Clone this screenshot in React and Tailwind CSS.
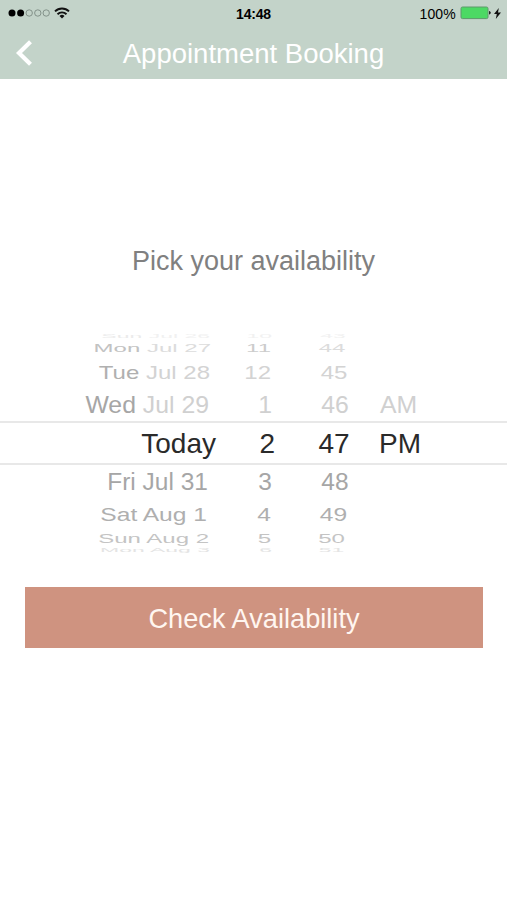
import React from "react";

// Rows of the date wheel, squashed more the further they are from the middle
const rows = [
  {
    day: "Sun",
    date: "Jul 26",
    hour: "10",
    minute: "43",
    box: "h-[7px] pt-0.5 text-[23px] text-[#f1f1f1] pr-[297px]",
    dayColor: "text-[#ebebeb]",
    timeLeft: "ml-[26px]",
    minuteShift: "pr-[4px]",
    scale: "scale-y-[0.2]",
  },
  {
    day: "Mon",
    date: "Jul 27",
    hour: "11",
    minute: "44",
    box: "h-[17px] pt-0.5 text-[24px] text-[#dcdcdc] pr-[296px]",
    dayColor: "text-[#c2c2c2]",
    hourColor: "text-[#cccccc]",
    timeLeft: "ml-[24px]",
    minuteShift: "pr-[4px]",
    scale: "scale-y-[0.46]",
  },
  {
    day: "Tue",
    date: "Jul 28",
    hour: "12",
    minute: "45",
    box: "h-[31px] pt-0.5 text-[24px] text-[#d3d3d3] pr-[297px]",
    dayColor: "text-[#b0b0b0]",
    timeLeft: "ml-[25px]",
    scale: "scale-y-[0.77]",
  },
  {
    day: "Wed",
    date: "Jul 29",
    hour: "1",
    minute: "46",
    period: "AM",
    box: "h-[34px] pt-0.5 text-[24.8px] text-[#d0d0d0] pr-[298px]",
    dayColor: "text-[#a6a6a6]",
    timeLeft: "ml-[27px]",
    scale: "scale-y-[0.94]",
  },
  {
    day: "Today",
    hour: "2",
    minute: "47",
    period: "PM",
    box: "h-[44px] border-y-2 border-[#e8e8e8] pt-0.5 text-[28px] text-[#2a2a2a] pr-[291px]",
    hourShift: "translate-x-[4px]",
    timeLeft: "ml-[19px]",
    scale: "scale-y-100",
  },
  {
    day: "Fri",
    date: "Jul 31",
    hour: "3",
    minute: "48",
    box: "h-[33px] pt-0.5 text-[24.5px] text-[#a6a6a6] pr-[299px]",
    timeLeft: "ml-[28px]",
    scale: "scale-y-[0.95]",
  },
  {
    day: "Sat",
    date: "Aug 1",
    hour: "4",
    minute: "49",
    box: "h-[33px] pt-0.5 text-[24.6px] text-[#afafaf] pr-[300px]",
    timeLeft: "ml-[28px]",
    minuteShift: "pr-[1px]",
    scale: "scale-y-[0.77]",
  },
  {
    day: "Sun",
    date: "Aug 2",
    hour: "5",
    minute: "50",
    box: "h-[15px] text-[24px] text-[#c4c4c4] pr-[298px]",
    timeLeft: "ml-[26px]",
    minuteShift: "pr-[5px]",
    scale: "scale-y-[0.5]",
  },
  {
    day: "Mon",
    date: "Aug 3",
    hour: "6",
    minute: "51",
    box: "h-[7px] pt-0.5 text-[23px] text-[#e4e4e4] pr-[297px]",
    timeLeft: "ml-[26px]",
    minuteShift: "pr-[7px]",
    scale: "scale-y-[0.2]",
  },
];

const StatusBar = () => {
  return (
    <div className="flex h-[27px] items-center px-2 text-black">
      {/* Signal */}
      <div className="flex flex-1 items-center">
        <svg
          className="-mt-0.5"
          width="42"
          height="10"
          viewBox="0 0 42 10"
        >
          <circle cx="4" cy="5" r="3.5" />
          <circle cx="12.6" cy="5" r="3.5" />
          <g fill="none" stroke="#7c8a82" strokeWidth="0.9">
            <circle cx="21.2" cy="5" r="3.2" />
            <circle cx="29.8" cy="5" r="3.2" />
            <circle cx="38.2" cy="5" r="3.2" />
          </g>
        </svg>
        <svg
          className="-mt-0.5 ml-1"
          width="16"
          height="12"
          viewBox="0 0 16 12"
        >
          <g fill="none" stroke="#111" strokeWidth="1.9">
            <path d="M1 4.4a10 10 0 0 1 14 0" />
            <path d="M3.5 7.2a6.4 6.4 0 0 1 9 0" />
          </g>
          <path d="M5.5 9a3.6 3.6 0 0 1 5 0L8 11.6z" fill="#111" />
        </svg>
      </div>

      <span className="pt-px text-[14px] font-bold tracking-[-0.2px]">
        14:48
      </span>

      {/* Battery */}
      <div className="flex flex-1 items-center justify-end">
        <span className="pt-px text-[14px] tracking-[0.2px]">100%</span>
        <svg
          className="-mt-px ml-1"
          width="31"
          height="14"
          viewBox="0 0 31 14"
        >
          <rect
            x="1"
            y="1"
            width="27"
            height="11.6"
            rx="1.5"
            fill="#4cd964"
            stroke="#5c9a6b"
            strokeWidth="1"
          />
          <path d="M29 5v3.6c1.2-.3 1.8-1 1.8-1.8S30.2 5.3 29 5z" fill="#222" />
        </svg>
        <svg
          className="-mt-px ml-[3px] mr-[-2px]"
          width="7"
          height="11"
          viewBox="0 0 7 11"
        >
          <path d="M4.8 0 0 6h2.8L1.8 11 7 4.6H4z" fill="#111" />
        </svg>
      </div>
    </div>
  );
};

const WheelRow = ({ row }) => {
  return (
    <div className={`flex ${row.box}`}>
      <div
        className={`flex min-w-0 flex-1 items-center justify-end whitespace-nowrap leading-none ${row.scale}`}
      >
        <span className={row.dayColor}>{row.day}</span>
        {row.date && <span className="whitespace-pre"> {row.date}</span>}
      </div>
      {/* Time columns */}
      <div className="w-0">
        <div
          className={`flex h-full w-[230px] items-center leading-none ${row.timeLeft} ${row.scale}`}
        >
          <span
            className={`w-[36px] text-right ${row.hourColor || ""} ${row.hourShift || ""}`}
          >
            {row.hour}
          </span>
          <span
            className={`ml-[43px] w-[40px] text-center ${row.minuteShift || ""}`}
          >
            {row.minute}
          </span>
          <span className="ml-[25px]">{row.period}</span>
        </div>
      </div>
    </div>
  );
};

const App = () => {
  return (
    <div className="flex h-[900px] w-[507px] flex-col overflow-hidden bg-white font-['Liberation_Sans',Arial,sans-serif]">
      {/* Header */}
      <header className="h-[79px] bg-[#c3d3c9]">
        <StatusBar />
        <div className="grid h-[52px] grid-cols-[48px_1fr_48px] items-center">
          <svg
            className="ml-[15px]"
            width="18"
            height="26"
            viewBox="0 0 18 26"
            fill="none"
            stroke="white"
            strokeWidth="4.2"
          >
            <path d="M15.5 1.8 4 13 15.5 24.2" />
          </svg>
          <h1 className="pt-px text-center text-[27.5px] text-white">
            Appointment Booking
          </h1>
        </div>
      </header>

      <h2 className="mt-[162px] text-center text-[27px] leading-10 text-[#808080]">
        Pick your availability
      </h2>

      {/* Date wheel */}
      <div className="mt-[51px] overflow-hidden">
        {rows.map((row, i) => (
          <WheelRow key={i} row={row} />
        ))}
      </div>

      {/* Button */}
      <button
        type="button"
        className="ml-[25px] mr-[24px] mt-[34px] h-[61px] bg-[#cf9380] pt-[3px] text-[27.2px] text-[#fff6f0]"
      >
        Check Availability
      </button>
    </div>
  );
};

export default App;
